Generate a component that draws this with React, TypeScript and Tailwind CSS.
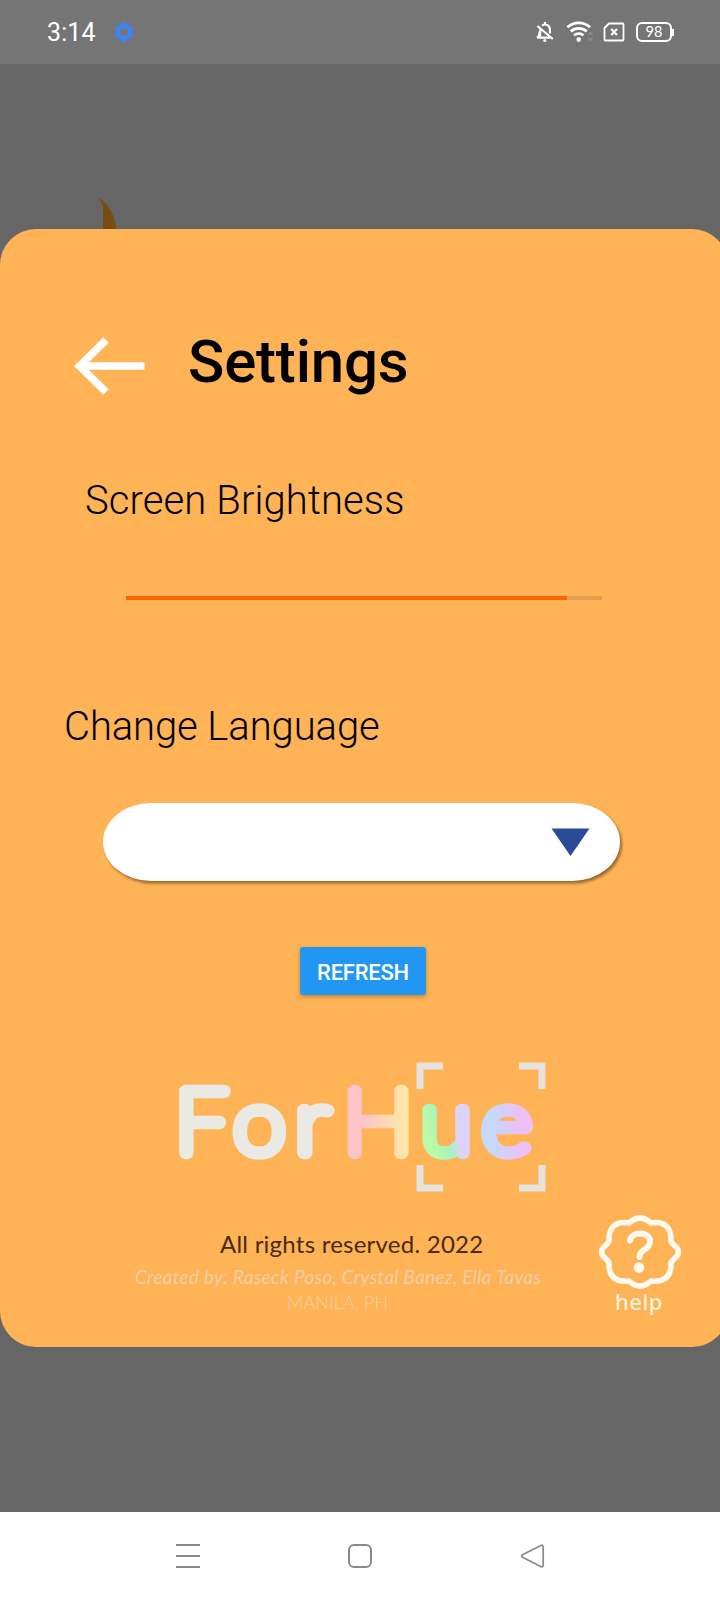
import React from "react";

function StatusBar() {
  return (
    <header className="flex h-16 shrink-0 items-center bg-[#757575] pr-[46px] pl-[47px]">
      <span className="w-[48px] pt-px text-[25px] leading-[30px] tracking-[0.1px] whitespace-nowrap text-white">3:14</span>
      <svg className="ml-[18px]" width="22" height="22" viewBox="0 0 22 22" fill="none">
        <circle cx="11" cy="11" r="6" stroke="#3f83f2" strokeWidth="4.4" />
        <circle cx="11" cy="11" r="8.6" stroke="#3f83f2" strokeWidth="2.4" strokeDasharray="4.5 4.5" strokeDashoffset="2.25" transform="rotate(-30 11 11)" />
      </svg>
      <div className="ml-auto flex items-center">
        <svg width="18" height="22" viewBox="0 0 18 22" fill="none" stroke="#fff" strokeWidth="2.1">
          <path d="M4.2 8.3V15.6M1 16.6h13M4.4 8.6 2.8 14.6 1 16.6M6 4.6C10 2 14 4.600 14 9v3.500M9 1v2.500M1.400 5l15.400 13" />
          <circle cx="8.800" cy="19.600" r="1.500" fill="#fff" stroke="none" />
        </svg>
        <svg className="ml-[12px]" width="28" height="22" viewBox="0 0 28 22" fill="none" stroke="#fff" strokeWidth="2.700">
          <path d="M1.400 6.300C8 .4 17.500.4 24.100 6.300M4.700 10.400c4.700-4 11.400-4 16.100 0M8 14.300c2.800-2.400 6.700-2.400 9.500 0" />
          <circle cx="12.700" cy="18.600" r="2.300" fill="#fff" stroke="none" />
          <path d="m22.500 14 2-2.500 2 2.500M22.500 17l2 2.500 2-2.500" stroke="#929292" strokeWidth="1.300" />
        </svg>
        <svg className="ml-[9px]" width="22" height="20" viewBox="0 0 22 20" fill="none" stroke="#fff">
          <path d="M6 1.500h13.700q.8 0 .8.800v15.400q0 .8-.8.800H2.300q-.8 0-.8-.8V6Z" strokeWidth="1.800" strokeLinejoin="round" />
          <path d="m8.300 7 5.600 6M13.900 7l-5.600 6" strokeWidth="2.300" />
        </svg>
        <div className="ml-[11px] flex h-5 w-9 items-center justify-center rounded-[6px] border-2 border-white font-[Lato,sans-serif] text-[14.500px] leading-none text-white">98</div>
        <div className="h-[7px] w-[2px] bg-white" />
      </div>
    </header>
  );
}

function Logo() {
  return (
    <svg width="370" height="130" viewBox="178 1061.500 370 130" className="shrink-0 overflow-visible">
      <defs>
        <linearGradient id="h" gradientUnits="userSpaceOnUse" x1="6" y1="0" x2="60" y2="0">
          <stop offset=".2" stopColor="#fdc3c6" />
          <stop offset="1" stopColor="#fbe9a6" />
        </linearGradient>
        <linearGradient id="u" gradientUnits="userSpaceOnUse" x1="1" y1="-12" x2="44" y2="-24">
          <stop offset=".15" stopColor="#bcfba6" />
          <stop offset=".5" stopColor="#a6f3be" />
          <stop offset=".75" stopColor="#ddd3f8" />
        </linearGradient>
        <linearGradient id="e" gradientUnits="userSpaceOnUse" x1="0" y1="0" x2="47" y2="0">
          <stop offset=".2" stopColor="#c5d9fb" />
          <stop offset=".75" stopColor="#edc0f6" />
        </linearGradient>
      </defs>
      <g className="font-[Lato,sans-serif] font-thin" fontSize="88" strokeWidth="12.500" strokeLinejoin="round">
        <g fill="#ebe9e3" stroke="#ebe9e3">
          <text transform="translate(175 1152) scale(1.06 1)">F</text>
          <text transform="translate(233.500 1152) scale(1.07 1)">o</text>
          <text transform="translate(295 1152) scale(1.13 1)">r</text>
        </g>
        <text transform="translate(343.500 1152) scale(1.05 1)" fill="url(#h)" stroke="url(#h)">H</text>
        <text transform="translate(421 1152) scale(1.06 1)" fill="url(#u)" stroke="url(#u)">u</text>
        <text transform="translate(482 1152) scale(1.09 1)" fill="url(#e)" stroke="url(#e)">e</text>
      </g>
      <path d="M420 1088.500V1065.500H443M519 1065.500h23v23M420 1164.500v23h23M519 1187.500h23v-23" fill="none" stroke="#e6e3df" strokeWidth="7" />
    </svg>
  );
}

function HelpButton() {
  return (
    <button className="flex w-[84px] flex-col items-center font-['Noto_Sans',sans-serif] text-[#fff1da]">
      <svg width="84" height="76" viewBox="0 0 84 76" fill="none" stroke="#fffaf0" strokeWidth="5.500" strokeLinecap="round" strokeLinejoin="round">
        <path d="M31 9q11-10 22 0q18-3 20 14q-1 5 3 8q9 7 0 14q-4 3-3 8q-2 16-20 14q-11 10-22 0q-18 2-20-14q1-5-3-8q-9-7 0-14q4-3 3-8q2-17 20-14Z" />
        <path d="M32 26.500c2-10 20-9 20 1 0 9-10.500 7-10.500 15.500" strokeWidth="6" />
        <circle cx="41" cy="53.500" r="5.300" fill="#fffaf0" stroke="none" />
      </svg>
      <span className="-mt-px mr-[2px] text-[22px] leading-[24px] font-medium tracking-[0.5px]">help</span>
    </button>
  );
}

function NavBar() {
  return (
    <nav className="flex h-[88px] shrink-0 items-center justify-between bg-white pr-[175px] pl-[176px] text-[#858585]">
      <div className="flex h-6 w-6 flex-col justify-between">
        <div className="h-[2px] bg-[#8a8a8a]" />
        <div className="h-[2px] bg-[#8a8a8a]" />
        <div className="h-[2px] bg-[#8a8a8a]" />
      </div>
      <div className="h-6 w-6 rounded-[6px] border-2 border-[#8a8a8a]" />
      <svg width="25" height="24" viewBox="0 0 25 24" fill="none" stroke="#8a8a8a" strokeWidth="1.700" strokeLinejoin="round">
        <path d="M2.500 10.800 20.800 1.400Q23.200.6 23.200 3v18q0 2.400-2.400 1.600L2.500 13.200q-2-1.200 0-2.400Z" />
      </svg>
    </nav>
  );
}

export default function App() {
  return (
    <div className="flex h-[1600px] w-[720px] flex-col overflow-hidden bg-[#666] font-[Roboto,sans-serif] text-black">
      <StatusBar />
      <div className="flex h-[165px] shrink-0 items-end pl-[98px]">
        <svg width="20" height="32" viewBox="0 0 20 32">
          <path d="M0 0Q17 12 18 32H5V10Q3 4 0 0Z" fill="#7a4b12" />
        </svg>
      </div>
      <main className="flex h-[1118px] w-[728px] shrink-0 flex-col rounded-[36px] bg-[#ffb357]">
        <div className="mt-[104px] ml-[74px] flex h-[66px] items-center">
          <svg width="72" height="58" viewBox="0 0 72 58" fill="none" stroke="#fff" strokeWidth="7.500">
            <path d="M32 3 5.500 29 32 55M7 29h63.500" />
          </svg>
          <h1 className="mb-[9px] ml-[42px] text-[60px] leading-[60px] font-medium tracking-[-0.2px]">Settings</h1>
        </div>
        <h2 className="mt-[78px] ml-[85px] text-[40px] leading-[48px] font-light tracking-[0.1px]">Screen Brightness</h2>
        <div className="mt-[71px] ml-[126px] flex h-1 w-[476px] bg-[#e39e50]">
          <div className="w-[441px] bg-[#ff6400]" />
        </div>
        <h2 className="mt-[103px] ml-[64px] text-[40px] leading-[48px] font-light tracking-[-0.1px]">Change Language</h2>
        <div className="mt-[52px] ml-[103px] flex h-[78px] w-[517px] items-center justify-end rounded-[48px/39px] bg-white pr-[30px] shadow-[2px_2.500px_3px_rgba(90,55,10,0.6)]">
          <svg width="39" height="29" viewBox="0 0 39 29">
            <path d="M.5.500h38L19.500 28Z" fill="#2b4b98" />
          </svg>
        </div>
        <button className="mt-[66px] ml-[300px] h-12 w-[126px] shrink-0 rounded-[3px] bg-[#2196f3] pt-[3px] text-[22px] leading-[45px] font-medium tracking-[-0.25px] text-white shadow-[0_2px_4px_rgba(90,50,0,0.35)]">REFRESH</button>
        <div className="mt-[66.500px] ml-[178px] flex">
          <Logo />
        </div>
        <div className="mt-[22px] flex">
          <div className="ml-[135px] flex w-[406px] flex-col font-[Lato,sans-serif] whitespace-nowrap">
            <p className="mt-[14px] ml-[85px] text-[24px] leading-[32px] tracking-[0.24px] text-[#4a2a0c]">All rights reserved. 2022</p>
            <p className="mt-[4px] text-[19px] leading-[26px] tracking-[0.26px] text-[#efcda6] italic">Created by: Raseck Poso, Crystal Banez, Ella Tavas</p>
            <p className="-mt-px ml-[152px] text-[18px] leading-[26px] font-light tracking-[0.1px] text-[#efcda6]">MANILA, PH</p>
          </div>
          <div className="ml-[57px]">
            <HelpButton />
          </div>
        </div>
      </main>
      <div className="grow" />
      <NavBar />
    </div>
  );
}
